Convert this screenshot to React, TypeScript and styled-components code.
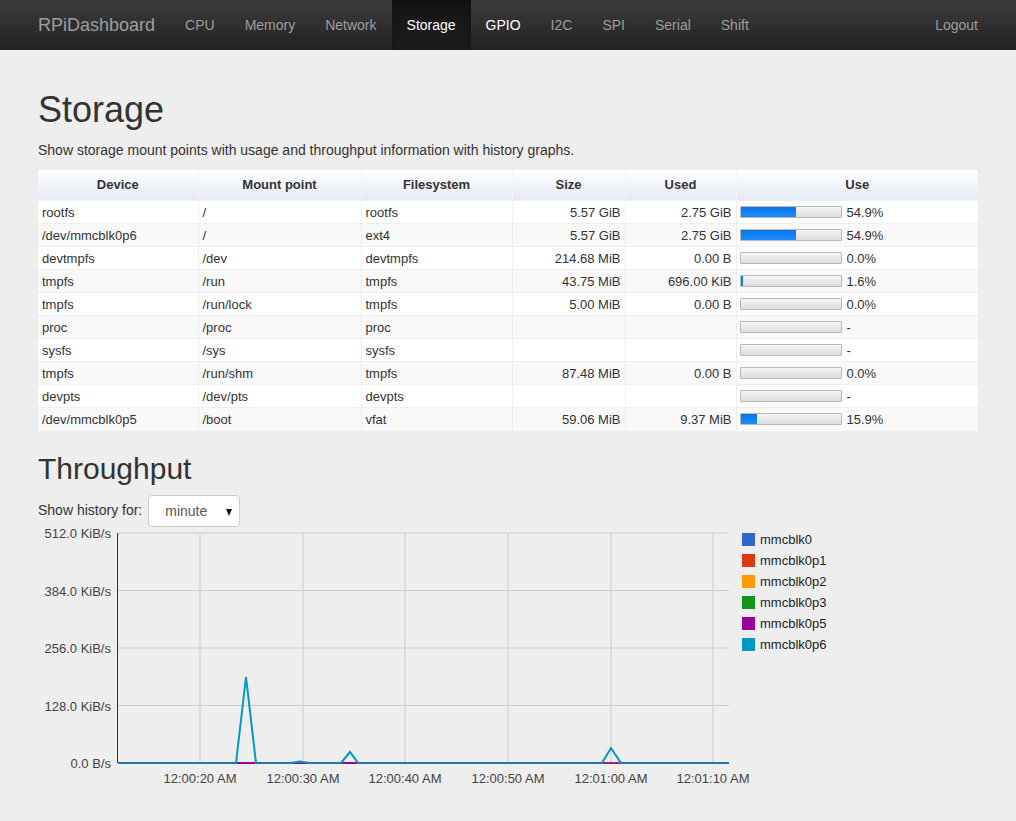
import React, { useState } from "react";
import styled, { createGlobalStyle } from "styled-components";

const GlobalStyle = createGlobalStyle`
  html, body {
    margin: 0;
    padding: 0;
    background: #eeeeee;
    font-family: "Liberation Sans", Arial, Helvetica, sans-serif;
    font-size: 14px;
    line-height: 20px;
    color: #333;
  }
  * {
    box-sizing: border-box;
  }
`;

const Navbar = styled.nav`
  height: 50px;
  background-image: linear-gradient(to bottom, #3c3c3c 0%, #222 100%);
  margin-bottom: 20px;
`;

const NavInner = styled.div`
  width: 970px;
  margin: 0 auto;
  padding: 0 15px;
  display: flex;
  align-items: stretch;
  height: 50px;
`;

const Brand = styled.a`
  font-size: 18px;
  line-height: 20px;
  padding: 15px;
  margin-left: -15px;
  color: #9d9d9d;
  text-decoration: none;
`;

const NavList = styled.ul`
  display: flex;
  list-style: none;
  margin: 0;
  padding: 0;
`;

const NavRight = styled(NavList)`
  margin-left: auto;
  margin-right: -15px;
`;

const NavLink = styled.a<{ $active?: boolean; $hover?: boolean }>`
  display: block;
  padding: 15px;
  line-height: 20px;
  font-size: 14px;
  text-decoration: none;
  color: ${(p) => (p.$active || p.$hover ? "#fff" : "#9d9d9d")};
  background-image: ${(p) =>
    p.$active ? "linear-gradient(to bottom, #151515 0%, #1c1c1c 100%)" : "none"};
  box-shadow: ${(p) => (p.$active ? "inset 0 3px 9px rgba(0,0,0,0.25)" : "none")};
`;

const Container = styled.div`
  display: flow-root;
  width: 970px;
  margin: 0 auto;
  padding: 0 15px;
`;

const H1 = styled.h1`
  font-size: 36px;
  font-weight: 500;
  line-height: 1.1;
  margin: 20px 0 10px;
  color: #333;
`;

const H2 = styled.h2`
  font-size: 30px;
  font-weight: 500;
  line-height: 1.1;
  margin: 21px 0 8px;
  color: #333;
`;

const Lead = styled.p`
  margin: 0 0 10px;
`;

const Table = styled.table`
  width: 940px;
  border-collapse: collapse;
  table-layout: fixed;
  font-size: 13px;
  margin-bottom: 20px;
`;

const Th = styled.th<{ $w: number }>`
  width: ${(p) => p.$w}px;
  height: 31px;
  padding: 0 4px;
  font-weight: bold;
  text-align: center;
  color: #333;
  background-image: linear-gradient(to bottom, #ffffff 0%, #e4e9f3 100%);
  border-left: 1px solid #f1f3f7;
  &:first-child {
    border-left: none;
  }
`;

const Tr = styled.tr<{ $odd: boolean }>`
  background: ${(p) => (p.$odd ? "#f9f9f9" : "#ffffff")};
`;

const Td = styled.td<{ $right?: boolean }>`
  height: 23px;
  padding: 0 4px;
  line-height: 17px;
  text-align: ${(p) => (p.$right ? "right" : "left")};
  border-top: 1px solid #eeeeee;
  border-left: 1px solid #eeeeee;
  white-space: nowrap;
  &:first-child {
    border-left: none;
  }
`;

const UseCell = styled.div`
  display: flex;
  align-items: center;
  gap: 5px;
  margin-left: -1px;
`;

const Bar = styled.div`
  width: 102px;
  height: 12px;
  border: 1px solid #b8b8b8;
  border-radius: 1px;
  background-image: linear-gradient(to bottom, #f6f6f6 0%, #dddddd 100%);
  overflow: hidden;
`;

const BarFill = styled.div`
  height: 100%;
  background-image: linear-gradient(to bottom, #0a74e8 0%, #1a8cff 100%);
`;

const HistoryRow = styled.div`
  display: flex;
  align-items: center;
  height: 34px;
  gap: 6px;
`;

const Select = styled.div`
  position: relative;
  width: 92px;
  height: 32px;
  background: #fff;
  border: 1px solid #ccc;
  border-radius: 4px;
  color: #555;
  font-size: 14px;
  line-height: 30px;
  padding-left: 16px;
  margin-top: 2px;
`;

const Caret = styled.span`
  position: absolute;
  right: 7px;
  top: 13px;
  width: 0;
  height: 0;
  border-left: 3.5px solid transparent;
  border-right: 3.5px solid transparent;
  border-top: 7px solid #111;
`;

const ChartBox = styled.div`
  width: 940px;
  height: 270px;
`;

type Row = {
  dev: string;
  mount: string;
  fs: string;
  size: string;
  used: string;
  pct: number | null;
};

const rows: Row[] = [
  { dev: "rootfs", mount: "/", fs: "rootfs", size: "5.57 GiB", used: "2.75 GiB", pct: 54.9 },
  { dev: "/dev/mmcblk0p6", mount: "/", fs: "ext4", size: "5.57 GiB", used: "2.75 GiB", pct: 54.9 },
  { dev: "devtmpfs", mount: "/dev", fs: "devtmpfs", size: "214.68 MiB", used: "0.00 B", pct: 0 },
  { dev: "tmpfs", mount: "/run", fs: "tmpfs", size: "43.75 MiB", used: "696.00 KiB", pct: 1.6 },
  { dev: "tmpfs", mount: "/run/lock", fs: "tmpfs", size: "5.00 MiB", used: "0.00 B", pct: 0 },
  { dev: "proc", mount: "/proc", fs: "proc", size: "", used: "", pct: null },
  { dev: "sysfs", mount: "/sys", fs: "sysfs", size: "", used: "", pct: null },
  { dev: "tmpfs", mount: "/run/shm", fs: "tmpfs", size: "87.48 MiB", used: "0.00 B", pct: 0 },
  { dev: "devpts", mount: "/dev/pts", fs: "devpts", size: "", used: "", pct: null },
  { dev: "/dev/mmcblk0p5", mount: "/boot", fs: "vfat", size: "59.06 MiB", used: "9.37 MiB", pct: 15.9 },
];

const navItems = ["CPU", "Memory", "Network", "Storage", "GPIO", "I2C", "SPI", "Serial", "Shift"];

const legend = [
  { name: "mmcblk0", color: "#3366cc" },
  { name: "mmcblk0p1", color: "#dc3912" },
  { name: "mmcblk0p2", color: "#ff9900" },
  { name: "mmcblk0p3", color: "#109618" },
  { name: "mmcblk0p5", color: "#990099" },
  { name: "mmcblk0p6", color: "#0099c6" },
];

// bar fill in px (inner width 100px), at least 2px when non-zero
const fillWidth = (pct: number | null) => {
  if (!pct) return 0;
  return Math.max(2, Math.round(pct));
};

const Chart: React.FC = () => {
  const left = 80;
  const right = 691;
  const top = 6;
  const bottom = 236;
  const hLines = [6, 63.5, 121, 178.5, 236];
  const yLabels = ["512.0 KiB/s", "384.0 KiB/s", "256.0 KiB/s", "128.0 KiB/s", "0.0 B/s"];
  const vLines = [162, 265, 367, 470, 573, 675];
  const xLabels = ["12:00:20 AM", "12:00:30 AM", "12:00:40 AM", "12:00:50 AM", "12:01:00 AM", "12:01:10 AM"];
  const p6 = `${left},${bottom} 198,${bottom} 208,150 218,${bottom} 252,${bottom} 262,234.5 272,${bottom} 303,${bottom} 312,225 320,${bottom} 564,${bottom} 573,221 583,${bottom} ${right},${bottom}`;
  const base = "#2476ab";
  return (
    <svg width="940" height="270" fontFamily="'Liberation Sans', Arial, sans-serif" fontSize="13">
      {hLines.map((y) => (
        <line key={y} x1={left} x2={right} y1={y} y2={y} stroke="#cccccc" strokeWidth="1" />
      ))}
      {vLines.map((x) => (
        <line key={x} x1={x} x2={x} y1={top} y2={bottom} stroke="#cccccc" strokeWidth="1" />
      ))}
      <line x1={left - 0.5} x2={left - 0.5} y1={top} y2={bottom} stroke="#333" strokeWidth="1" />
      {yLabels.map((t, i) => (
        <text key={t} x={73} y={hLines[i] + 5} textAnchor="end" fill="#444">
          {t}
        </text>
      ))}
      {xLabels.map((t, i) => (
        <text key={t} x={vLines[i]} y={256} textAnchor="middle" fill="#444">
          {t}
        </text>
      ))}
      <polyline points={`${left},${bottom} ${right},${bottom}`} fill="none" stroke="#3366cc" strokeWidth="2" />
      <polyline points={`198,${bottom} 218,${bottom}`} fill="none" stroke="#990099" strokeWidth="2" />
      <polyline points={`252,${bottom} 272,${bottom}`} fill="none" stroke="#990099" strokeWidth="2" />
      <polyline points={`303,${bottom} 320,${bottom}`} fill="none" stroke="#990099" strokeWidth="2" />
      <polyline points={`564,${bottom} 583,${bottom}`} fill="none" stroke="#b0206e" strokeWidth="2" />
      <polyline points={p6} fill="none" stroke="#0099c6" strokeWidth="2" strokeLinejoin="miter" />
      <polyline points={`${left},${bottom} 198,${bottom}`} fill="none" stroke={base} strokeWidth="2" />
      <polyline points={`218,${bottom} 252,${bottom}`} fill="none" stroke={base} strokeWidth="2" />
      <polyline points={`272,${bottom} 303,${bottom}`} fill="none" stroke={base} strokeWidth="2" />
      <polyline points={`320,${bottom} 564,${bottom}`} fill="none" stroke={base} strokeWidth="2" />
      <polyline points={`583,${bottom} ${right},${bottom}`} fill="none" stroke={base} strokeWidth="2" />
      {legend.map((l, i) => (
        <g key={l.name}>
          <rect x={704} y={6 + i * 21} width={13} height={13} fill={l.color} />
          <text x={722} y={6 + i * 21 + 11} fill="#222">
            {l.name}
          </text>
        </g>
      ))}
    </svg>
  );
};

function App() {
  const [range] = useState("minute");
  const widths = [160, 163, 151, 113, 111, 242];
  return (
    <>
      <GlobalStyle />
      <Navbar>
        <NavInner>
          <Brand href="#">RPiDashboard</Brand>
          <NavList>
            {navItems.map((item) => (
              <li key={item}>
                <NavLink href="#" $active={item === "Storage"} $hover={item === "GPIO"}>
                  {item}
                </NavLink>
              </li>
            ))}
          </NavList>
          <NavRight>
            <li>
              <NavLink href="#">Logout</NavLink>
            </li>
          </NavRight>
        </NavInner>
      </Navbar>
      <Container>
        <H1>Storage</H1>
        <Lead>Show storage mount points with usage and throughput information with history graphs.</Lead>
        <Table>
          <thead>
            <tr>
              {["Device", "Mount point", "Filesystem", "Size", "Used", "Use"].map((h, i) => (
                <Th key={h} $w={widths[i]}>
                  {h}
                </Th>
              ))}
            </tr>
          </thead>
          <tbody>
            {rows.map((r, i) => (
              <Tr key={i} $odd={i % 2 === 1}>
                <Td>{r.dev}</Td>
                <Td>{r.mount}</Td>
                <Td>{r.fs}</Td>
                <Td $right>{r.size}</Td>
                <Td $right>{r.used}</Td>
                <Td>
                  <UseCell>
                    <Bar>
                      <BarFill style={{ width: `${fillWidth(r.pct)}px` }} />
                    </Bar>
                    <span>{r.pct === null ? "-" : `${r.pct.toFixed(1)}%`}</span>
                  </UseCell>
                </Td>
              </Tr>
            ))}
          </tbody>
        </Table>
        <H2>Throughput</H2>
        <HistoryRow>
          <span>Show history for:</span>
          <Select>
            {range}
            <Caret />
          </Select>
        </HistoryRow>
        <ChartBox>
          <Chart />
        </ChartBox>
      </Container>
    </>
  );
}

export default App;
